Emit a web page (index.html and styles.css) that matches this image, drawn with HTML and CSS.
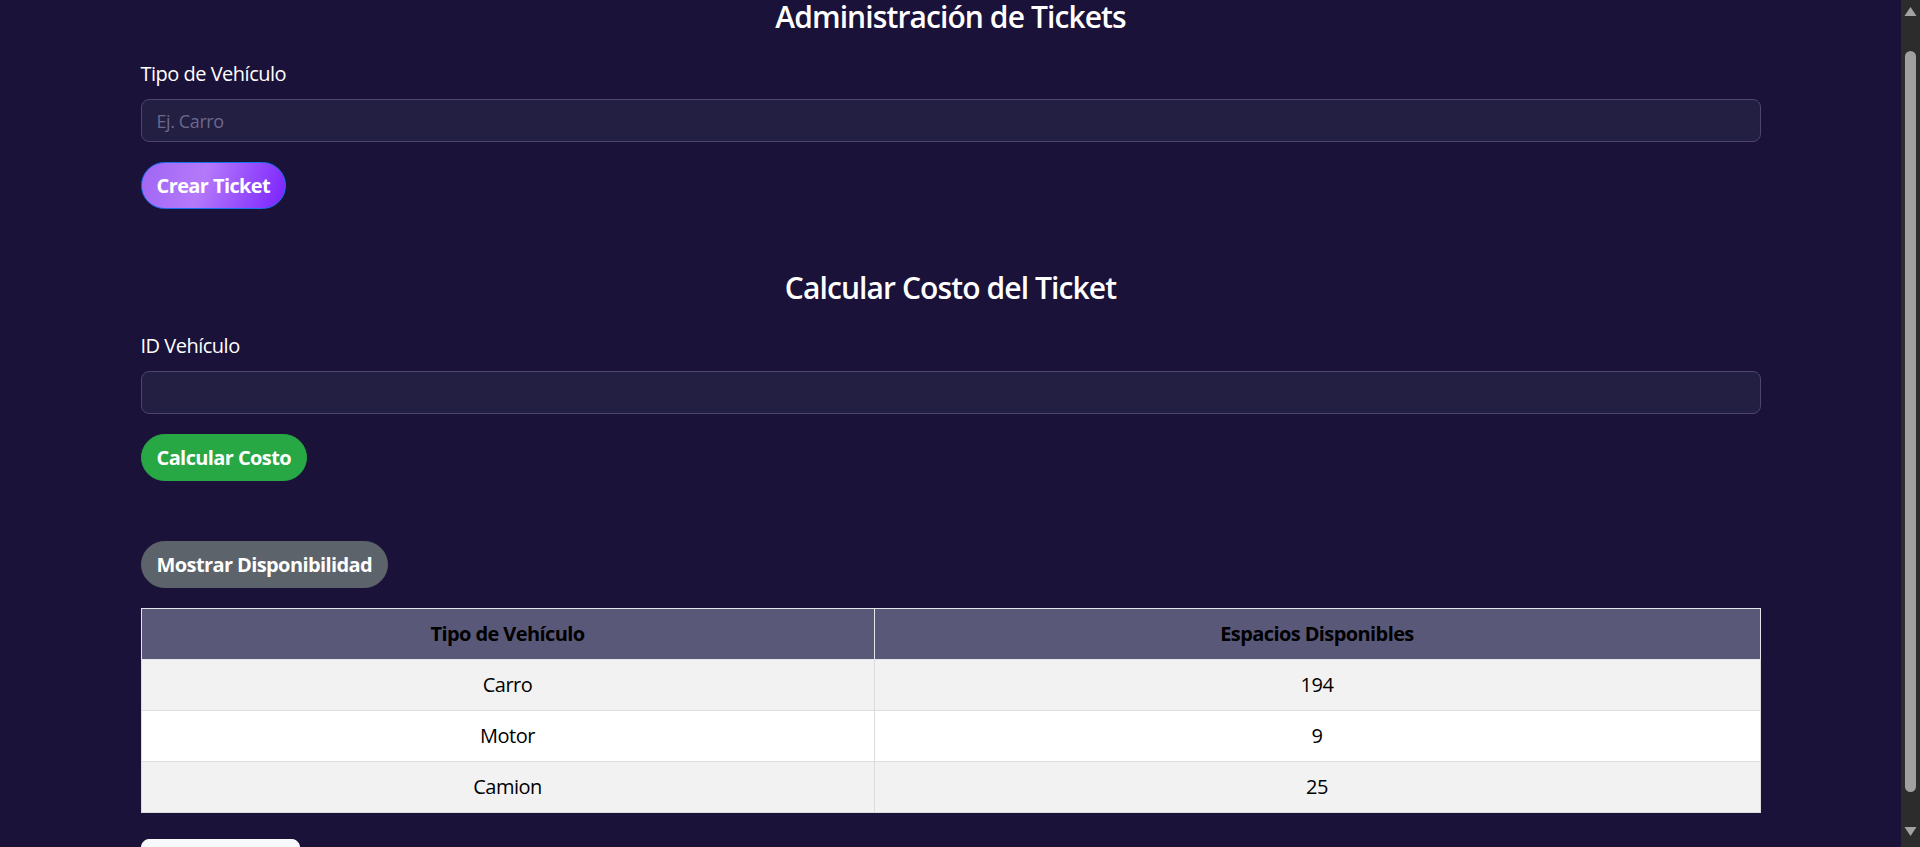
FILE: index.html
```html
<!DOCTYPE html>
<html lang="es">
<head>
<meta charset="utf-8">
<title>Administración de Tickets</title>
<link rel="stylesheet" href="styles.css">
</head>
<body>
<div class="container">
  <section class="block">
    <h2 class="title title-first">Administración de Tickets</h2>
    <label class="form-label" for="tipo">Tipo de Vehículo</label>
    <input class="form-control" id="tipo" type="text" placeholder="Ej. Carro">
    <button class="btn btn-gradient">Crear Ticket</button>
  </section>

  <section class="block block-second">
    <h2 class="title">Calcular Costo del Ticket</h2>
    <label class="form-label" for="idv">ID Vehículo</label>
    <input class="form-control" id="idv" type="text">
    <button class="btn btn-success">Calcular Costo</button>
  </section>

  <section class="block block-third">
    <button class="btn btn-secondary">Mostrar Disponibilidad</button>
    <table class="avail">
      <colgroup><col class="c1"><col class="c2"></colgroup>
      <thead>
        <tr><th>Tipo de Vehículo</th><th>Espacios Disponibles</th></tr>
      </thead>
      <tbody>
        <tr class="odd"><td>Carro</td><td>194</td></tr>
        <tr><td>Motor</td><td>9</td></tr>
        <tr class="odd"><td>Camion</td><td>25</td></tr>
      </tbody>
    </table>
    <button class="btn btn-light">Ocultar Tabla</button>
  </section>
</div>

<aside class="scrollbar" aria-hidden="true">
  <svg class="sb-arrow" width="19" height="17" viewBox="0 0 19 17"><polygon points="3.5,16 9.5,7 15.5,16" fill="#a3a3a3"/></svg>
  <div class="sb-thumb"></div>
  <svg class="sb-arrow sb-down" width="19" height="17" viewBox="0 0 19 17"><polygon points="3.5,1 15.5,1 9.5,10" fill="#a3a3a3"/></svg>
</aside>
<script src="scroll.js"></script>
</body>
</html>
```

FILE: styles.css
```css
html {
  background: #1a1239;
  scroll-behavior: auto;
}

body {
  margin: 0 19px 0 0;
  background: #1a1239;
  color: #ffffff;
  font-family: "Open Sans", "Noto Sans", "Liberation Sans", sans-serif;
  font-size: 20px;
  line-height: 30px;
  letter-spacing: -0.5px;
}

.container {
  width: 1620px;
  margin: 0 auto;
  padding-top: 38px;
  padding-bottom: 5px;
}

.block {
  display: flex;
  flex-direction: column;
  align-items: flex-start;
}

.block-second {
  margin-top: 61px;
}

.block-third {
  margin-top: 60px;
}

.title {
  align-self: stretch;
  margin: 0 0 25px;
  font-size: 30px;
  line-height: 36px;
  font-weight: 600;
  letter-spacing: -0.9px;
  text-align: center;
  color: #ffffff;
}
.title-first {
  margin-bottom: 24px;
}

.form-label {
  display: block;
  margin-bottom: 10px;
  font-size: 20px;
  line-height: 30px;
  color: #ffffff;
}

.form-control {
  box-sizing: border-box;
  align-self: stretch;
  height: 43px;
  margin: 0 0 20px;
  padding: 0 15px;
  background: #221f42;
  border: 1px solid #4a466e;
  border-radius: 8px;
  color: #ffffff;
  font-family: inherit;
  font-size: 18px;
  letter-spacing: -0.4px;
  outline: none;
}
.form-control::placeholder {
  color: #6c688c;
}

.btn {
  box-sizing: border-box;
  height: 47px;
  padding: 7.5px 15px;
  border: 1px solid transparent;
  border-radius: 24px;
  font-family: inherit;
  font-size: 20px;
  line-height: 30px;
  font-weight: 700;
  letter-spacing: -0.6px;
  color: #ffffff;
  cursor: pointer;
}

.btn-gradient {
  background: linear-gradient(110deg, #a066f4 0%, #b479fa 42%, #7a22fd 100%);
  border-color: #1a6ef0;
}

.btn-success {
  background: #28a745;
  border-color: #28a745;
}

.btn-secondary {
  background: #5c636a;
  border-color: #5c636a;
  margin-bottom: 20px;
}

.btn-light {
  background: #f8f9fa;
  border-color: #f8f9fa;
  color: #212529;
  border-radius: 8px;
  margin-top: 26px;
}

.avail {
  width: 1620px;
  border-collapse: collapse;
  table-layout: fixed;
  color: #000000;
  font-size: 20px;
  line-height: 30px;
}
.avail .c1 { width: 733px; }
.avail th,
.avail td {
  padding: 10px;
  border: 1px solid #dcdcdc;
  text-align: center;
}
.avail th {
  background: #5a5879;
  font-weight: 700;
  letter-spacing: -0.6px;
  border-color: #e4e4ea;
}
.avail tbody tr {
  background: #ffffff;
}
.avail tbody tr.odd {
  background: #f2f2f2;
}

/* browser scrollbar (drawn, since the capture hides native scrollbars) */
.scrollbar {
  position: fixed;
  top: 0;
  right: 0;
  width: 19px;
  height: 100vh;
  background: #2c2c2c;
  display: flex;
  flex-direction: column;
  align-items: center;
}
.sb-arrow {
  display: block;
  flex: none;
}
.sb-thumb {
  flex: none;
  width: 11px;
  height: 741px;
  margin-top: 34px;
  background: #a0a0a0;
  border-radius: 6px;
}
.sb-down {
  margin-top: auto;
  margin-bottom: 4px;
}
```

FILE: scroll.js
```js
window.scrollTo(0, 39);
```
